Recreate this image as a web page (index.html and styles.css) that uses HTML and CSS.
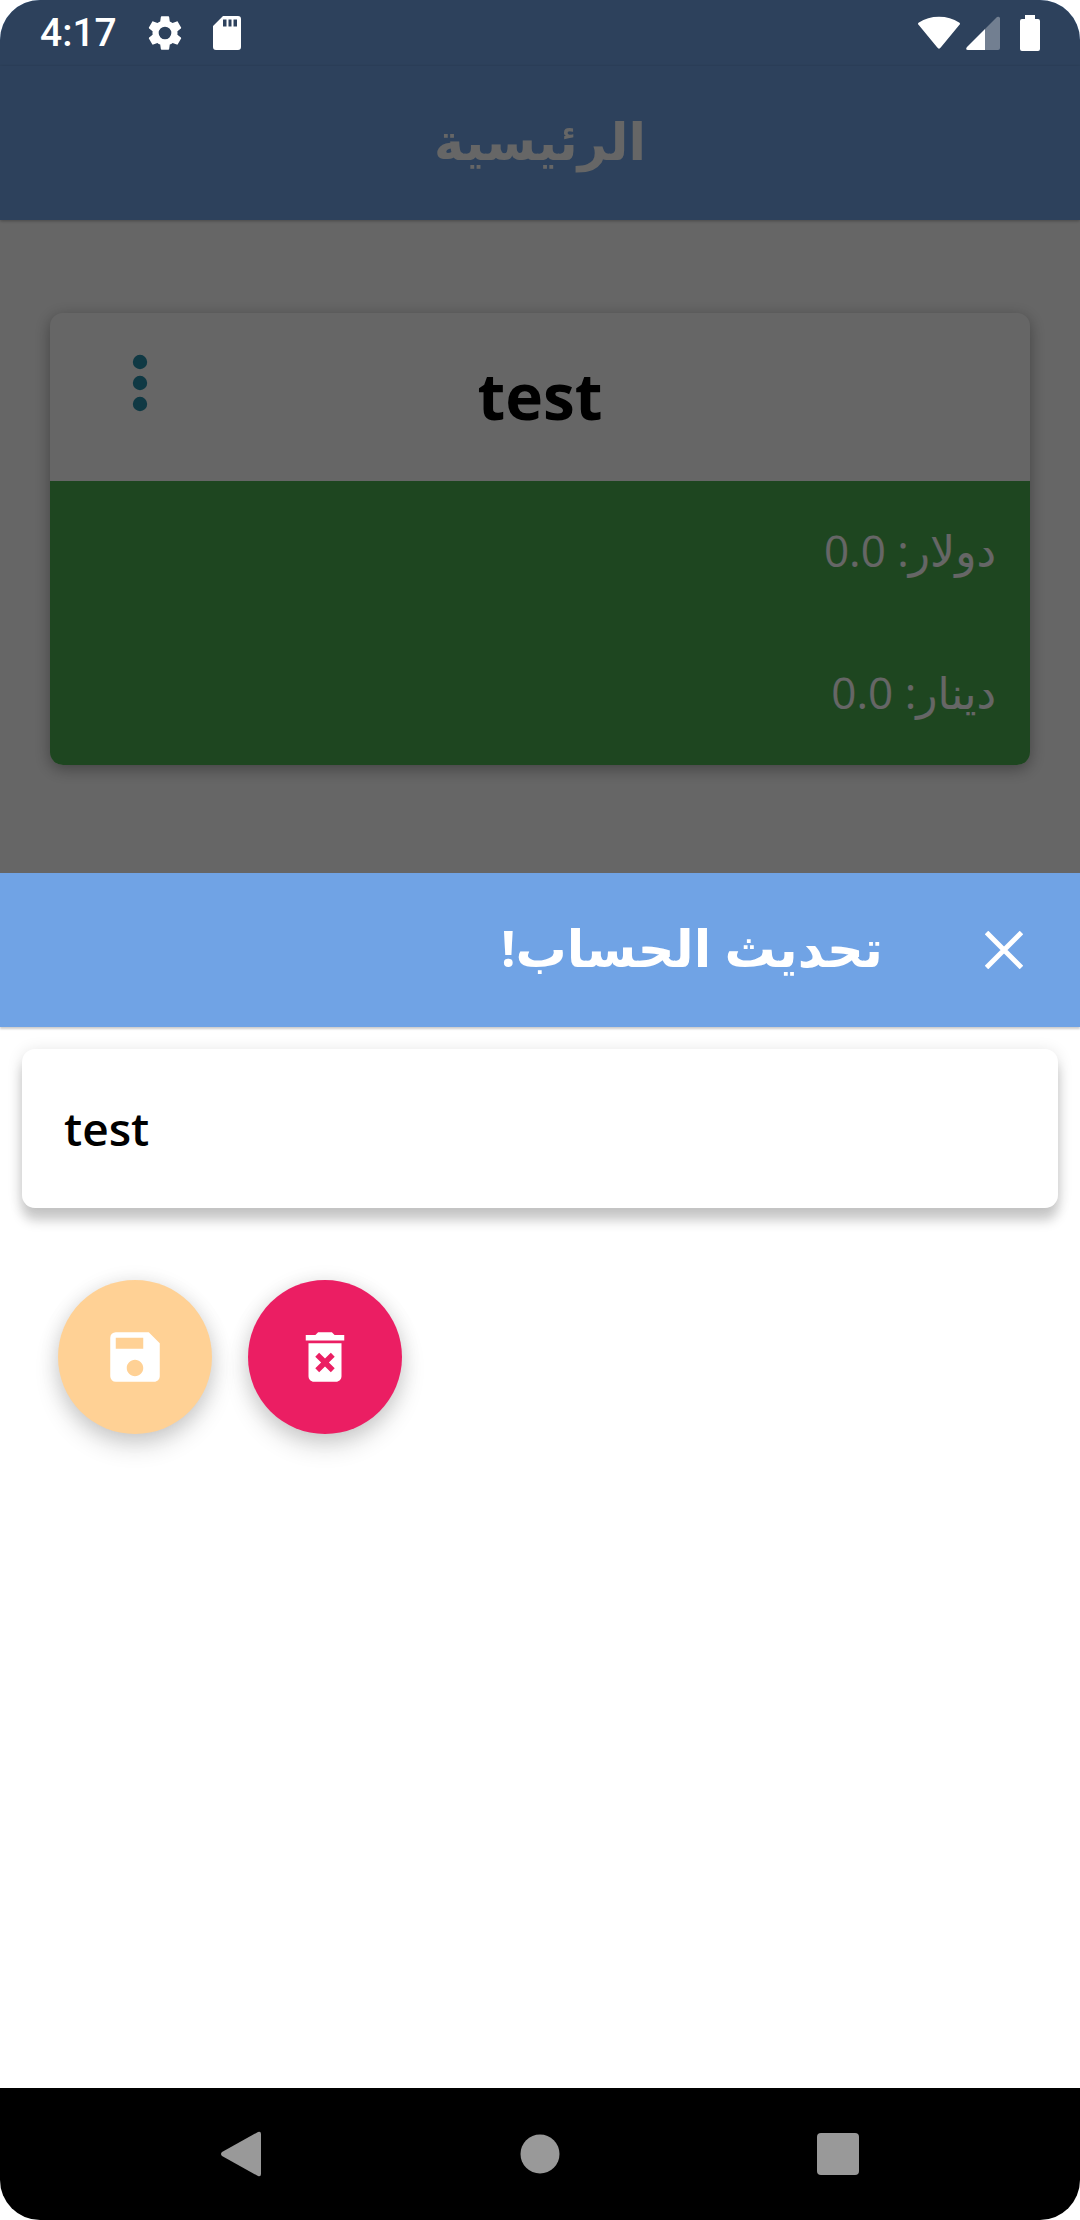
FILE: index.html
```html
<!DOCTYPE html>
<html lang="ar" dir="rtl">
<head>
<meta charset="utf-8">
<meta name="viewport" content="width=device-width, initial-scale=1">
<title>الرئيسية</title>
<link rel="stylesheet" href="styles.css">
</head>
<body>
<div class="screen">
  <div class="home">
    <div class="status-bar" dir="ltr">
      <div class="status-group status-left">
        <span class="clock">4:17</span>
        <svg width="40" height="40" viewBox="0 0 24 24" aria-hidden="true"><path fill="currentColor" d="M19.43 12.98c.04-.32.07-.64.07-.98s-.03-.66-.07-.98l2.11-1.65c.19-.15.24-.42.12-.64l-2-3.46c-.12-.22-.39-.3-.61-.22l-2.49 1c-.52-.4-1.08-.73-1.69-.98l-.38-2.65C14.46 2.18 14.25 2 14 2h-4c-.25 0-.46.18-.49.42l-.38 2.65c-.61.25-1.17.59-1.69.98l-2.49-1c-.23-.09-.49 0-.61.22l-2 3.46c-.13.22-.07.49.12.64l2.11 1.65c-.04.32-.07.65-.07.98s.03.66.07.98l-2.11 1.65c-.19.15-.24.42-.12.64l2 3.46c.12.22.39.3.61.22l2.49-1c.52.4 1.08.73 1.69.98l.38 2.65c.03.24.24.42.49.42h4c.25 0 .46-.18.49-.42l.38-2.65c.61-.25 1.17-.59 1.69-.98l2.49 1c.23.09.49 0 .61-.22l2-3.46c.12-.22.07-.49-.12-.64l-2.11-1.65zM12 15.800a3.800 3.800 0 1 1 0-7.600 3.800 3.800 0 0 1 0 7.600z"/></svg>
        <svg width="28" height="34" viewBox="0 0 28 34" aria-hidden="true"><path fill="currentColor" fill-rule="evenodd" d="M10 0H25Q28 0 28 3V31Q28 34 25 34H3Q0 34 0 31V10ZM10 3.500V10.500H13.500V3.500ZM15.500 3.500V10.500H18.500V3.500ZM20.500 3.500V10.500H24V3.500Z"/></svg>
      </div>
      <div class="status-group status-right">
        <svg width="42" height="34" viewBox="0 0 44 34" aria-hidden="true"><path fill="currentColor" d="M1 9Q-1 7 1 6Q10 0 22 0T43 6Q45 7 43 9L24 32Q22 35 20 32Z"/></svg>
        <svg class="signal" width="34" height="34" viewBox="0 0 34 34" aria-hidden="true"><path fill="currentColor" opacity=".33" d="M19 13L31 1Q33 0 34 2V32Q34 34 32 34H19Z"/><path fill="currentColor" d="M19 13V34H2Q-1 34 1 31Z"/></svg>
        <svg width="20" height="36" viewBox="0 0 20 36" aria-hidden="true"><path fill="currentColor" d="M5 0H15V4H18Q20 4 20 6V34Q20 36 18 36H2Q0 36 0 34V6Q0 4 2 4H5Z"/></svg>
      </div>
    </div>
    <header class="app-bar"><h1>الرئيسية</h1></header>
    <main class="content">
      <article class="account">
        <div class="account-head">
          <h2>test</h2>
          <button class="menu" type="button" aria-label="خيارات">
            <svg width="16" height="58" viewBox="0 0 16 58" aria-hidden="true"><g fill="currentColor"><circle cx="8" cy="8" r="7.200"/><circle cx="8" cy="29" r="7.200"/><circle cx="8" cy="50" r="7.200"/></g></svg>
          </button>
        </div>
        <div class="balances">
          <p>دولار: 0.0</p>
          <p>دينار: 0.0</p>
        </div>
      </article>
    </main>
  </div>
  <section class="sheet" role="dialog" aria-labelledby="sheet-title">
    <header class="sheet-bar">
      <button class="close" type="button" aria-label="إغلاق">
        <svg width="38" height="38" viewBox="0 0 38 38" aria-hidden="true"><path stroke="currentColor" stroke-width="5" d="M1.500 1.500L36.500 36.500M36.500 1.500L1.500 36.500"/></svg>
      </button>
      <h2 id="sheet-title">تحديث الحساب!</h2>
    </header>
    <form class="form">
      <input class="name" type="text" dir="ltr" value="test" aria-label="اسم الحساب">
      <div class="actions">
        <button class="fab delete" type="button" aria-label="حذف">
          <svg width="66" height="66" viewBox="0 0 24 24" aria-hidden="true"><path fill="currentColor" fill-rule="evenodd" d="M6 19c0 1.100.9 2 2 2h8c1.100 0 2-.9 2-2V7H6v12zm2.460-7.120l1.410-1.410L12 12.590l2.120-2.120 1.410 1.410L13.410 14l2.120 2.120-1.410 1.410L12 15.410l-2.120 2.120-1.410-1.410L10.590 14l-2.130-2.120zM15.500 4l-1-1h-5l-1 1H5v2h14V4z"/></svg>
        </button>
        <button class="fab save" type="button" aria-label="حفظ">
          <svg width="66" height="66" viewBox="0 0 24 24" aria-hidden="true"><path fill="currentColor" d="M17 3H5a2 2 0 0 0-2 2v14a2 2 0 0 0 2 2h14c1.100 0 2-.9 2-2V7l-4-4zm-5 16c-1.660 0-3-1.340-3-3s1.340-3 3-3 3 1.340 3 3-1.340 3-3 3zm3-10H5V5h10v4z"/></svg>
        </button>
      </div>
    </form>
  </section>
  <nav class="nav-bar" dir="ltr">
    <button type="button" aria-label="رجوع"><svg width="42" height="46" viewBox="0 0 42 46" aria-hidden="true"><path fill="currentColor" d="M1 21L37 1Q40 0 40 3V43Q40 46 37 45L1 25Q-1 23 1 21Z"/></svg></button>
    <button type="button" aria-label="الشاشة الرئيسية"><svg width="40" height="40" viewBox="0 0 40 40" aria-hidden="true"><circle cx="20" cy="20" r="19.500" fill="currentColor"/></svg></button>
    <button type="button" aria-label="التطبيقات"><svg width="42" height="42" viewBox="0 0 42 42" aria-hidden="true"><rect width="42" height="42" rx="4" fill="currentColor"/></svg></button>
  </nav>
</div>
</body>
</html>
```
FILE: styles.css
```css
* { box-sizing: border-box; }

body {
  margin: 0;
  background: #fff;
  font-family: "Open Sans", "DejaVu Sans", sans-serif;
}

h1, h2, p { margin: 0; }

button {
  display: flex;
  align-items: center;
  justify-content: center;
  padding: 0;
  border: 0;
  background: none;
  color: inherit;
}

svg { display: block; flex: none; }

.screen {
  display: flex;
  flex-direction: column;
  min-height: 100vh;
  border-radius: 40px;
  overflow: hidden;
}

/* Home page, dimmed while the sheet is open */
.home {
  position: relative;
  background: linear-gradient(#70a3e5 66px, #fff 66px);
}

.home::after {
  content: "";
  position: absolute;
  inset: 0;
  background: rgba(0, 0, 0, .6);
}

.status-bar {
  position: relative;
  z-index: 1;
  display: flex;
  justify-content: space-between;
  height: 66px;
  padding: 0 40px;
  color: #fff;
}

.status-group { display: flex; align-items: center; }
.status-left { gap: 28px; }
.status-right { gap: 6px; }
.signal { margin-right: 14px; }

.clock {
  font: 500 39px/66px Roboto, sans-serif;
}

.app-bar {
  display: flex;
  align-items: center;
  justify-content: center;
  height: 154px;
  padding-bottom: 6px;
  background: #70a3e5;
  color: #fff;
  box-shadow: 0 1px 3px rgba(0, 0, 0, .3);
}

.app-bar h1 { font-size: 51px; line-height: 80px; }

.content { padding: 93px 50px 108px; }

.account {
  border-radius: 13px;
  overflow: hidden;
  background: #fff;
  box-shadow: 0 4px 16px rgba(0, 0, 0, .35);
}

.account-head {
  display: grid;
  grid-template-columns: 180px 1fr 180px;
  height: 168px;
}

.account-head h2 {
  grid-column: 2;
  font-size: 64px;
  line-height: 166px;
  text-align: center;
}

.menu { height: 140px; color: #2890ab; }

.balances { padding: 0 34px; background: #4caf50; color: #fff; }
.balances p { padding-bottom: 4px; font-size: 44px; line-height: 138px; }

/* Account update sheet */
.sheet { flex: 1; background: #fff; }

.sheet-bar {
  display: flex;
  align-items: center;
  gap: 102px;
  height: 154px;
  padding: 0 57px;
  background: #70a3e5;
  color: #fff;
  box-shadow: 0 2px 2px rgba(0, 0, 0, .2);
}

.close { height: 80px; }
.sheet-bar h2 { padding-bottom: 6px; font-size: 51px; line-height: 80px; }

.form { padding: 22px; }

.name {
  display: block;
  width: 100%;
  height: 159px;
  padding: 0 42px 2px;
  border: 0;
  border-radius: 13px;
  background: #fff;
  color: #000;
  font: 600 46px/60px "Open Sans", sans-serif;
  box-shadow: 0 13px 12px rgba(0, 0, 0, .18), 0 2px 16px rgba(0, 0, 0, .12);
}

.actions {
  display: flex;
  justify-content: flex-end;
  gap: 36px;
  padding: 72px 36px;
}

.fab {
  width: 154px;
  height: 154px;
  border-radius: 50%;
  color: #fff;
  box-shadow: 0 12px 24px rgba(0, 0, 0, .16), 0 2px 20px rgba(0, 0, 0, .1);
}

.save { background: #ffd195; }
.delete { background: #eb1e63; }

.nav-bar {
  display: grid;
  grid-template-columns: repeat(3, 1fr);
  height: 132px;
  padding: 0 93px;
  background: #000;
  color: #999;
}
```
